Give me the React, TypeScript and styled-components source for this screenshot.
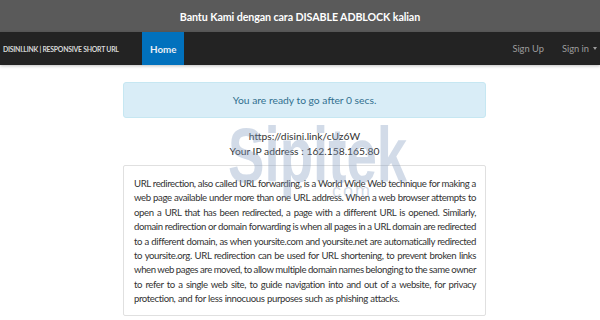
import React from 'react';
import styled, { createGlobalStyle } from 'styled-components';

const GlobalStyle = createGlobalStyle`
    body {
        margin: 0;
        background: #ffffff;
        font-family: Lato, "Liberation Sans", sans-serif;
        color: #333333;
    }
`;

const Page = styled.div`
    position: relative;
    width: 600px;
    height: 320px;
    overflow: hidden;
`;

const Banner = styled.div`
    height: 32px;
    background-color: #5a5a5a;
    color: #ffffff;
    font-size: 10.7px;
    font-weight: bold;
    letter-spacing: -0.1px;
    display: flex;
    align-items: center;
    justify-content: center;
`;

const NavBar = styled.nav`
    height: 33px;
    background-color: #232323;
    display: flex;
    align-items: stretch;
    box-shadow: 0 1px 3px rgba(0, 0, 0, 0.25);
`;

const Brand = styled.div`
    display: flex;
    align-items: center;
    padding-left: 3px;
    width: 139px;
    color: #d8d8d8;
    font-size: 6.9px;
    font-weight: bold;
    letter-spacing: -0.25px;
    white-space: nowrap;
`;

const NavLink = styled.div<{ $active?: boolean; $last?: boolean }>`
    display: flex;
    align-items: center;
    padding: 0 ${(p) => (p.$active ? '8px' : p.$last ? '3px' : '9px')} 0 ${(p) => (p.$active ? '8px' : '9px')};
    background-color: ${(p) => (p.$active ? '#0171bd' : 'transparent')};
    color: ${(p) => (p.$active ? '#e8eef5' : '#9d9d9d')};
    font-size: ${(p) => (p.$active ? '9.8px' : '9.3px')};
    font-weight: ${(p) => (p.$active ? 'bold' : 'normal')};
`;

const NavRight = styled.div`
    margin-left: auto;
    display: flex;
`;

const Caret = styled.span`
    display: inline-block;
    margin-left: 4px;
    border-left: 2.5px solid transparent;
    border-right: 2.5px solid transparent;
    border-top: 3px solid #9d9d9d;
`;

const Container = styled.main`
    width: 363px;
    margin: 17px 0 0 123px;
`;

const Alert = styled.div`
    height: 36px;
    box-sizing: border-box;
    background-color: #d9edf7;
    border: 1px solid #c6e7f2;
    border-radius: 3px;
    color: #31708f;
    font-size: 10.3px;
    display: flex;
    align-items: center;
    justify-content: center;
`;

const Info = styled.div`
    margin-top: 11px;
    text-align: center;
    font-size: 10.3px;
    line-height: 15px;
    color: #333333;
`;

const Panel = styled.div`
    margin-top: 6px;
    border: 1px solid #e0e0e0;
    border-radius: 2px;
    padding: 11px 9px 8px 10px;
    background: #ffffff;
`;

const Paragraph = styled.div`
    font-size: 9.6px;
    letter-spacing: -0.4px;
    line-height: 14.4px;
    color: #333333;
`;

const Line = styled.div<{ $last?: boolean }>`
    white-space: nowrap;
    text-align: justify;
    text-align-last: ${(p) => (p.$last ? 'left' : 'justify')};
    word-spacing: ${(p) => (p.$last ? '0.5px' : '-1px')};
`;

/* watermark lies over the content, as in the screenshot */
const Watermark = styled.div`
    position: absolute;
    left: 228px;
    top: 117px;
    pointer-events: none;
    color: rgba(130, 155, 190, 0.36);
    font-family: "Liberation Sans", sans-serif;
    line-height: 1;
`;

const WatermarkName = styled.div`
    font-size: 77px;
    font-weight: bold;
    transform: scaleX(0.71);
    transform-origin: left top;
    white-space: nowrap;
`;

const WatermarkDomain = styled.div`
    margin: -12px 0 0 104px;
    font-size: 18px;
    letter-spacing: 2px;
`;

const lines = [
    'URL redirection, also called URL forwarding, is a World Wide Web technique for making a',
    'web page available under more than one URL address. When a web browser attempts to',
    'open a URL that has been redirected, a page with a different URL is opened. Similarly,',
    'domain redirection or domain forwarding is when all pages in a URL domain are redirected',
    'to a different domain, as when yoursite.com and yoursite.net are automatically redirected',
    'to yoursite.org. URL redirection can be used for URL shortening, to prevent broken links',
    'when web pages are moved, to allow multiple domain names belonging to the same owner',
    'to refer to a single web site, to guide navigation into and out of a website, for privacy',
    'protection, and for less innocuous purposes such as phishing attacks.',
];

export default function App() {
    return (
        <Page>
            <GlobalStyle />
            <Banner>Bantu Kami dengan cara DISABLE ADBLOCK kalian</Banner>
            <NavBar>
                <Brand>DISINI.LINK | RESPONSIVE SHORT URL</Brand>
                <NavLink $active>Home</NavLink>
                <NavRight>
                    <NavLink>Sign Up</NavLink>
                    <NavLink $last>
                        Sign in
                        <Caret />
                    </NavLink>
                </NavRight>
            </NavBar>
            <Container>
                <Alert>You are ready to go after 0 secs.</Alert>
                <Info>
                    https://disini.link/cUz6W
                    <br />
                    Your IP address : 162.158.165.80
                </Info>
                <Panel>
                    <Paragraph>
                        {lines.map((line, i) => (
                            <Line key={i} $last={i === lines.length - 1}>
                                {line}
                            </Line>
                        ))}
                    </Paragraph>
                </Panel>
            </Container>
            <Watermark>
                <WatermarkName>Sipitek</WatermarkName>
                <WatermarkDomain>com</WatermarkDomain>
            </Watermark>
        </Page>
    );
}
